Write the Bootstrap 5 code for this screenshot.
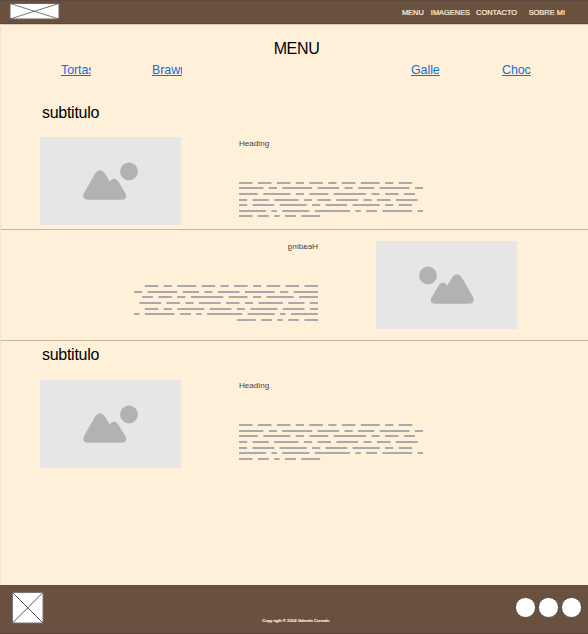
<!DOCTYPE html>
<html lang="es">
<head>
<meta charset="utf-8">
<meta name="viewport" content="width=device-width, initial-scale=1">
<title>Menu</title>
<link href="https://cdn.jsdelivr.net/npm/bootstrap@5.3.0/dist/css/bootstrap.min.css" rel="stylesheet">
<style>
body{font-family:"Liberation Sans",Arial,sans-serif;background:#fff0d9;color:#000;height:634px;overflow:hidden;line-height:1}
svg{display:block;flex:none}
.topbar{height:24px;background:#69503f;border-top:1px solid #5c493d;border-bottom:1px solid #594539;box-shadow:0 1px #d9cbb8;padding:2px 23px 0 9px}
.topbar a{font-size:7.45px;line-height:19px;color:#fff0d9;text-decoration:none;-webkit-text-stroke:.2px #fff0d9;white-space:nowrap}
.gap-a{margin-left:7px}
.gap-b{margin-left:6px}
.gap-c{margin-left:11.500px}
.page{height:561px;border-left:1px solid #f4e4cc}
.title{font-size:16px;letter-spacing:-.35px;line-height:18px;padding-top:16px;padding-left:4px;margin:0;font-weight:400}
.cats{padding:4px 56px 0 60px;height:46px}
.cats a{width:30px;height:17px;font-size:12.4px;letter-spacing:-.05px;line-height:16px;color:#0f6fde;overflow:hidden;white-space:nowrap}
.cats a.second{margin-left:61px}
.sub{font-size:16px;letter-spacing:-.28px;line-height:18px;margin:0;padding-left:41px;font-weight:400}
.sub-next{padding-top:5px}
.feature{padding-left:39px}
.feature-one{padding-top:15px;height:107px}
.feature-two{padding-top:11px;height:110px}
.feature-three{padding-top:16px}
.feature.flip{transform:scaleX(-1);padding-left:71px}
.copy{margin-left:58px}
.copy h3{font-size:8.1px;line-height:10px;margin:1px 0 0;font-weight:400;color:#444}
.copy svg{margin-top:33px}
.feature-one .copy h3{margin-top:2px}
.rule{height:1px;background:#c5b69f}
.foot{height:49px;background:#69503f;border-top:1px solid #5c5345;border-bottom:1px solid #5b4436;padding:6px 6px 0 12px}
.foot small{font-size:4.25px;line-height:6px;color:#fff0d9;margin:26px 0 0 32px;-webkit-text-stroke:.2px #fff0d9;white-space:nowrap}
.dots{gap:2.500px;padding-top:5px}
.dot{width:20.500px;height:20.500px;background:#fff;border:1px solid #5a4a3d}
</style>
<script src="https://cdn.jsdelivr.net/npm/bootstrap@5.3.0/dist/js/bootstrap.bundle.min.js"></script>
</head>
<body>
<svg width="0" height="0" class="position-absolute">
<symbol id="photo" viewBox="0 0 141 88"><rect width="141" height="88" fill="#e6e6e6"/><circle cx="89" cy="34.5" r="8.9" fill="#b2b2b2"/><path d="M44 56 L55.2 36.500 Q60 29.800 64.800 36.500 L69.900 44.500 Q74 38.600 78.300 44.500 L85.500 56.500 Q88 62.600 82 62.800 H48 Q41.500 62.300 44 56Z" fill="#b2b2b2"/></symbol>
</svg>
<nav class="topbar d-flex justify-content-between">
<svg width="51" height="17" viewBox="0 0 51 17"><rect x="1" y=".5" width="49" height="15.500" fill="#fff" stroke="#69645f"/><path d="M1 .5L50 16M50 .5L1 16" stroke="#555" stroke-width=".8"/></svg>
<div class="d-flex"><a href="#">MENU</a><a href="#" class="gap-a">IMAGENES</a><a href="#" class="gap-b">CONTACTO</a><a href="#" class="gap-c">SOBRE MI</a></div>
</nav>
<main class="page">
<h1 class="title text-center">MENU</h1>
<div class="cats d-flex justify-content-between">
<div class="d-flex"><a href="#">Tortas</a><a href="#" class="second">Brawn</a></div>
<div class="d-flex"><a href="#">Galle</a><a href="#" class="second">Choc</a></div>
</div>
<h2 class="sub">subtitulo</h2>
<section class="feature feature-one d-flex">
<svg width="141" height="88"><use href="#photo"/></svg>
<div class="copy"><h3>Heading</h3><svg class="words" data-y="0,5,11,17,22,28,33" width="186" height="36"></svg></div>
</section>
<div class="rule"></div>
<section class="feature feature-two flip d-flex">
<svg width="141" height="88"><use href="#photo"/></svg>
<div class="copy"><h3>Heading</h3><svg class="words" data-y="0,6,11,17,23,28,34" width="186" height="36"></svg></div>
</section>
<div class="rule"></div>
<h2 class="sub sub-next">subtitulo</h2>
<section class="feature feature-three d-flex">
<svg width="141" height="88"><use href="#photo"/></svg>
<div class="copy"><h3>Heading</h3><svg class="words" data-y="0,6,11,17,23,28,34" width="186" height="36"></svg></div>
</section>
</main>
<footer class="foot d-flex justify-content-between">
<svg width="32" height="32" viewBox="0 0 32 32"><rect x=".5" y=".5" width="30.500" height="30.500" fill="#fff" stroke="#777"/><path d="M.5 .5L31 31M31 .5L.5 31" stroke="#555" stroke-width="1"/></svg>
<small>Copy rigth © 2024 Valentin Corrado</small>
<div class="dots d-flex"><span class="dot rounded-circle"></span><span class="dot rounded-circle"></span><span class="dot rounded-circle"></span></div>
</footer>
<script>
// Greeked paragraph: word lengths per line, drawn as bars.
const lines=[[5,5,5,3,5,3,5,7,3,5],[9,3,11,8,3,6,11,3],[7,10,3,7,12,3,5,4],[3,6,9,3,5,8,3,5,8],[3,8,10,3,8,10,3,5],[10,2,10,13,2,4,11,2],[5,4,2,4,7]];
document.querySelectorAll('.words').forEach(s=>{
  const ys=s.dataset.y.split(',');let out='';
  lines.forEach((l,i)=>{let x=0;l.forEach(n=>{out+=`<rect x="${(x*2.706).toFixed(2)}" y="${ys[i]}" width="${(n*2.706).toFixed(2)}" height="2" fill="#aaa"/>`;x+=n+2;});});
  s.innerHTML=out;
});
</script>
</body>
</html>
